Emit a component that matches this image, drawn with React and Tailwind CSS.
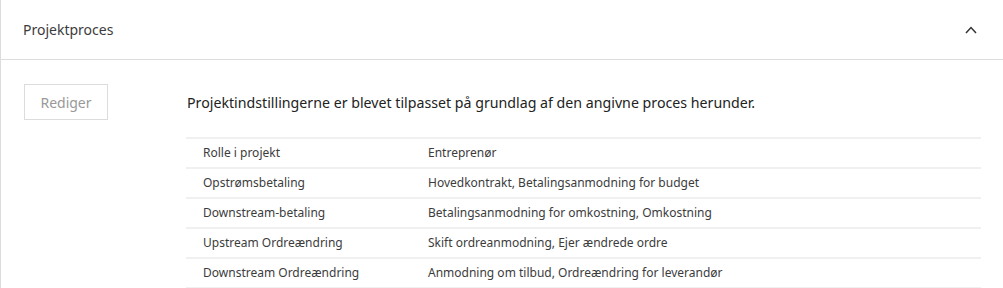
const rows = [
  ["Rolle i projekt", "Entreprenør"],
  ["Opstrømsbetaling", "Hovedkontrakt, Betalingsanmodning for budget"],
  ["Downstream-betaling", "Betalingsanmodning for omkostning, Omkostning"],
  ["Upstream Ordreændring", "Skift ordreanmodning, Ejer ændrede ordre"],
  ["Downstream Ordreændring", "Anmodning om tilbud, Ordreændring for leverandør"],
];

const ChevronUp = () => (
  <svg viewBox="0 0 12 8" fill="none" stroke="currentColor" strokeWidth="1.5" className="w-[12px] h-[8px] text-[#333]">
    <path d="M1 7l5-5.5L11 7" />
  </svg>
);

export default function App() {
  return (
    <div className="w-[1003px] h-[288px] bg-white overflow-hidden font-['Noto_Sans',sans-serif]">
      <div className="border-l border-[#dcdcdc] h-full">
        <div className="h-[60px] flex items-center justify-between pl-[22px] pr-[26px] border-b border-[#dcdcdc]">
          <span className="text-[14px] text-[#3c3c3c]">Projektproces</span>
          <ChevronUp />
        </div>

        <div className="flex pt-[24px]">
          <div className="w-[185px] pl-[23px] shrink-0">
            <button className="w-[84px] h-[36px] border border-[#dcdcdc] text-[14px] text-[#999] bg-white">
              Rediger
            </button>
          </div>
          <div className="w-[795px]">
            <p className="text-[14.2px] text-[#222] pl-px pt-[8px] h-[53px]">
              Projektindstillingerne er blevet tilpasset på grundlag af den angivne proces herunder.
            </p>
            <div className="border-t-2 border-[#f0f0f0]">
              {rows.map(([k, v]) => (
                <div key={k} className="flex h-[30px] items-center border-b-2 border-[#f0f0f0] text-[12px] text-[#3c3c3c]">
                  <span className="w-[242px] pl-[17px]">{k}</span>
                  <span>{v}</span>
                </div>
              ))}
            </div>
          </div>
        </div>
      </div>
    </div>
  );
}
